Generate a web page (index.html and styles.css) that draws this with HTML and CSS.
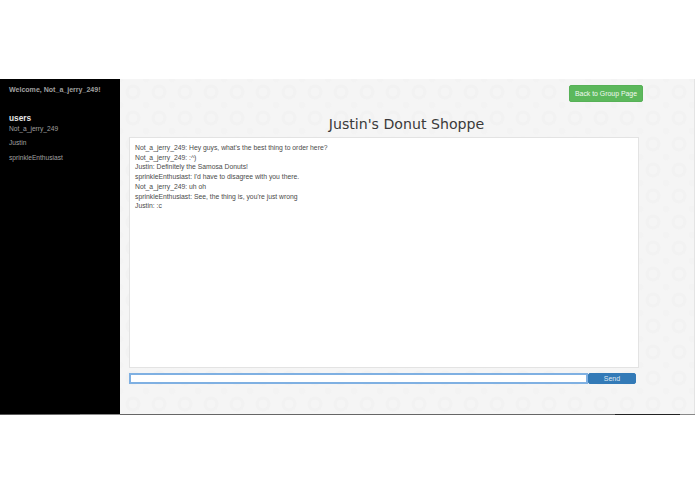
FILE: index.html
```html
<!DOCTYPE html>
<html lang="en">
<head>
<meta charset="utf-8">
<title>Justin's Donut Shoppe</title>
<link rel="stylesheet" href="styles.css">
</head>
<body>
<div class="frame">
  <aside class="sidebar">
    <p class="welcome">Welcome, Not_a_jerry_249!</p>
    <h2 class="users-title">users</h2>
    <ul class="users">
      <li>Not_a_jerry_249</li>
      <li>Justin</li>
      <li>sprinkleEnthusiast</li>
    </ul>
  </aside>
  <main class="main">
    <div class="topbar"><a class="back" href="#">Back to Group Page</a></div>
    <h1 class="title">Justin's Donut Shoppe</h1>
    <div class="log">
      <div>Not_a_jerry_249: Hey guys, what's the best thing to order here?</div>
      <div>Not_a_jerry_249: :^)</div>
      <div>Justin: Definitely the Samosa Donuts!</div>
      <div>sprinkleEnthusiast: I'd have to disagree with you there.</div>
      <div>Not_a_jerry_249: uh oh</div>
      <div>sprinkleEnthusiast: See, the thing is, you're just wrong</div>
      <div>Justin: :c</div>
    </div>
    <form class="composer">
      <textarea class="input"></textarea>
      <button class="send" type="button">Send</button>
    </form>
  </main>
</div>
<div class="edge"></div>
</body>
</html>
```
FILE: styles.css
```css
html, body { margin: 0; padding: 0; background: #fff; }
body { font-family: "Liberation Sans", Arial, sans-serif; height: 494px; overflow: hidden; }
.frame { display: flex; margin-top: 79px; height: 335px; filter: blur(0.3px); }
.edge { height: 1px; background: linear-gradient(to right, #555 0, #777 80px, #8a8a8a 80px, #8a8a8a 120px, #666 120px, #666 615px, #222 615px, #222 680px, #888 680px); }
.sidebar { width: 120px; flex: none; background: #000; color: #bdbdbd; box-sizing: border-box; padding: 6px 0 0 9px; font-size: 6.65px; }
.welcome { margin: 0; font-weight: 700; line-height: 10px; font-size: 7.05px; color: #a0a0a0; }
.users-title { margin: 17px 0 0; font-size: 8.3px; line-height: 12px; color: #e6e6e6; font-weight: 700; }
.users { list-style: none; margin: -2px 0 0; padding: 0; }
.users li { line-height: 14.4px; color: #a0a0a0; }
.main { flex: 1; display: flex; flex-direction: column; box-sizing: border-box; padding: 6px 55px 0 9px;
  background-color: #f5f5f5;
  background-image:
    radial-gradient(circle at center, transparent 4px, #f2f2f2 5px, #f2f2f2 7px, transparent 8px),
    radial-gradient(circle at center, #f3f3f3 0, #f3f3f3 3px, transparent 4px);
  background-size: 26px 26px, 26px 26px;
  background-position: 0 0, 13px 13px;
  border-right: 1px solid #e4e4e4;
}
.topbar { display: flex; justify-content: flex-end; margin-right: -4px; height: 17px; }
.back { box-sizing: border-box; width: 74px; height: 17px; background: #5cb85c; border: 1px solid #57b157; border-radius: 2px; color: #f2f8f2; font-size: 6.9px; line-height: 15px; text-align: center; text-decoration: none; }
.title { margin: 13px 0 0; height: 22px; font-family: "DejaVu Sans", sans-serif; font-weight: 400; font-size: 14.15px; line-height: 18px; text-align: center; color: #3a3a3a; padding-left: 45px; }
.log { box-sizing: border-box; height: 231px; background: #fff; border: 1px solid #e3e3e3; padding: 5px; font-size: 6.8px; line-height: 9.7px; color: #4a4a4a; }
.composer { display: flex; margin: 5px 0 0; height: 11px; }
.input { box-sizing: border-box; width: 459px; height: 11px; margin: 0; padding: 0; flex: none; border: 2px solid #7fb0e2; outline: none; background: #fff; resize: none; }
.send { box-sizing: border-box; width: 48px; height: 11px; margin: 0; padding: 0; border: 1px solid #337ab7; border-radius: 2px; background: #337ab7; color: #dfe9f3; font: 7px/9px "Liberation Sans", Arial, sans-serif; }
```
